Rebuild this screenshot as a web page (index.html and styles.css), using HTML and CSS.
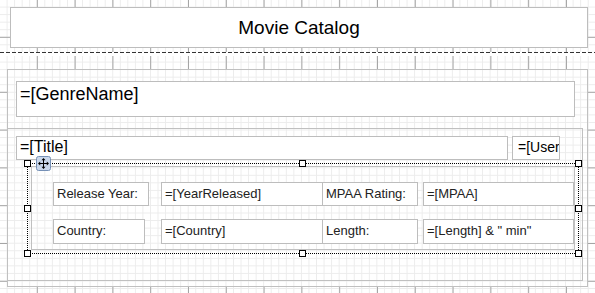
FILE: index.html
```html
<!DOCTYPE html>
<html lang="en">
<head>
<meta charset="UTF-8">
<meta name="viewport" content="width=device-width, initial-scale=1.0">
<title>Movie Catalog - report designer</title>
<link rel="stylesheet" href="styles.css">
</head>
<body>

<div class="band band-header">
    <div class="ctl title-box">Movie Catalog</div>
</div>
<div class="band-sep"></div>

<div class="band band-body">
    <div class="group">
        <div class="ctl genre-box">=[GenreName]</div>

        <div class="detail">
            <div class="detail-top">
                <div class="ctl title-field">=[Title]</div>
                <div class="ctl user-field">=[User</div>
            </div>

            <div class="selection">
                <div class="frame">
                    <div class="row">
                        <div class="ctl cell lbl-year">Release Year:</div>
                        <div class="ctl cell val-year">=[YearReleased]</div>
                        <div class="ctl cell lbl-mpaa">MPAA Rating:</div>
                        <div class="ctl cell val-mpaa">=[MPAA]</div>
                    </div>
                    <div class="row row-2">
                        <div class="ctl cell lbl-country">Country:</div>
                        <div class="ctl cell val-country">=[Country]</div>
                        <div class="ctl cell lbl-length">Length:</div>
                        <div class="ctl cell val-length">=[Length] &amp; " min"</div>
                    </div>
                </div>

                <!-- resize handles -->
                <span class="handle h-tl"></span>
                <span class="handle h-tc"></span>
                <span class="handle h-tr"></span>
                <span class="handle h-ml"></span>
                <span class="handle h-mr"></span>
                <span class="handle h-bl"></span>
                <span class="handle h-bc"></span>
                <span class="handle h-br"></span>

                <svg class="move-grip" width="15" height="15" viewBox="0 0 15 15">
                    <rect x="0.5" y="0.5" width="14" height="14" rx="2" fill="#c9d7eb" stroke="#7590b6"/>
                    <path d="M7.5 4V11M4 7.5H11" stroke="#000" stroke-width="1"/>
                    <path d="M7.5 2L5.5 4.2H9.5Z M7.5 13L5.5 10.8H9.5Z M2 7.5L4.2 5.5V9.5Z M13 7.5L10.8 5.5V9.5Z" fill="#000"/>
                </svg>
            </div>
        </div>
    </div>
</div>

</body>
</html>
```

FILE: styles.css
```css
* {
    box-sizing: border-box;
}
body {
    margin: 0;
    width: 595px;
    height: 293px;
    overflow: hidden;
    background: #fff;
    font-family: "Liberation Sans", Arial, sans-serif;
    color: #000;
}

/* design surface grid: 1cm major, 2mm minor */
.band {
    background-image:
        linear-gradient(to right, transparent 37px, #a4a4a4 37px),
        linear-gradient(to bottom, transparent 37px, #a4a4a4 37px),
        linear-gradient(to right, transparent 6.56px, #ececec 6.56px),
        linear-gradient(to bottom, transparent 6.56px, #ececec 6.56px);
    background-size: 37.8px 37.8px, 37.8px 37.8px, 7.56px 7.56px, 7.56px 7.56px;
    background-attachment: fixed;
}
.band-header {
    height: 52px;
    padding: 7px 0 0 10px;
    background-position: 0 0;
}
.band-sep {
    height: 1px;
    background: repeating-linear-gradient(to right, #333 0 4px, transparent 4px 6px);
}
.band-body {
    height: 240px;
    padding: 16px 0 0 7px;
    background-image:
        linear-gradient(#fff, #fff),
        linear-gradient(to right, transparent 37px, #a4a4a4 37px),
        linear-gradient(to bottom, transparent 37px, #a4a4a4 37px),
        linear-gradient(to right, transparent 6.56px, #ececec 6.56px),
        linear-gradient(to bottom, transparent 6.56px, #ececec 6.56px);
    background-size: 100% 3px, 37.8px 37.8px, 37.8px 37.8px, 7.56px 7.56px, 7.56px 7.56px;
    background-repeat: no-repeat, repeat, repeat, repeat, repeat;
    background-position: 0 0, 0 55px, 0 55px, 0 55px, 0 55px;
    background-attachment: scroll, fixed, fixed, fixed, fixed;
}

.ctl {
    background: #fff;
    border: 1px solid #bdbdbd;
    white-space: nowrap;
    overflow: hidden;
}
.title-box {
    width: 578px;
    height: 41px;
    display: flex;
    align-items: center;
    justify-content: center;
    font-size: 19px;
}

/* group header + detail sections */
.group, .detail {
    background-color: #fff;
    background-image:
        linear-gradient(to right, transparent 6.56px, #ececec 6.56px),
        linear-gradient(to bottom, transparent 6.56px, #ececec 6.56px);
    background-size: 7.56px 7.56px;
    background-attachment: fixed;
    background-position: 0 55px;
    border: 1px solid #c0c0c0;
}
.group {
    width: 581px;
    padding: 11px 0 5px 0;
}
.genre-box {
    width: 559px;
    height: 36px;
    margin-left: 8px;
    padding: 2px 3px;
    font-size: 18px;
}
.detail {
    width: 576px;
    margin: 11px 0 0 -1px;
    padding: 7px 0 26px 0;
}
.detail-top {
    display: flex;
    margin-left: 8px;
}
.title-field {
    width: 492px;
    height: 24px;
    padding: 1px 3px 0;
    font-size: 16px;
}
.user-field {
    width: 48px;
    height: 24px;
    margin-left: 4px;
    padding: 2px 5px 0;
    font-size: 14px;
}

/* selected table */
.selection {
    position: relative;
    width: 552px;
    margin: 3px 0 0 19px;
    padding: 2px 3px 3px 3px;
    border: 1px dotted #000;
}
.frame {
    width: 544px;
    height: 84px;
    border: 1px solid #c0c0c0;
    padding: 15px 0 0 21px;
}
.row {
    display: flex;
    height: 24px;
}
.row-2 {
    height: 25px;
    margin-top: 13px;
}
.cell {
    padding: 3px 3px 0;
    font-size: 13px;
    color: #222;
}
.lbl-year { width: 96px; }
.val-year { width: 162px; margin-left: 12px; }
.lbl-mpaa { width: 96px; margin-left: -1px; }
.val-mpaa { width: 151px; margin-left: 5px; }
.lbl-country { width: 92px; }
.val-country { width: 162px; margin-left: 16px; }
.lbl-length { width: 96px; margin-left: -1px; }
.val-length { width: 151px; margin-left: 5px; }

.handle {
    position: absolute;
    width: 7px;
    height: 7px;
    background: #fff;
    border: 1px solid #000;
}
.h-tl, .h-tc, .h-tr { top: -4px; }
.h-bl, .h-bc, .h-br { bottom: -4px; }
.h-ml, .h-mr { top: 50%; margin-top: -4px; }
.h-tl, .h-ml, .h-bl { left: -4px; }
.h-tr, .h-mr, .h-br { right: -4px; }
.h-tc, .h-bc { left: 50%; margin-left: -4px; }

.move-grip {
    position: absolute;
    left: 8px;
    top: -8px;
    display: block;
}
```
